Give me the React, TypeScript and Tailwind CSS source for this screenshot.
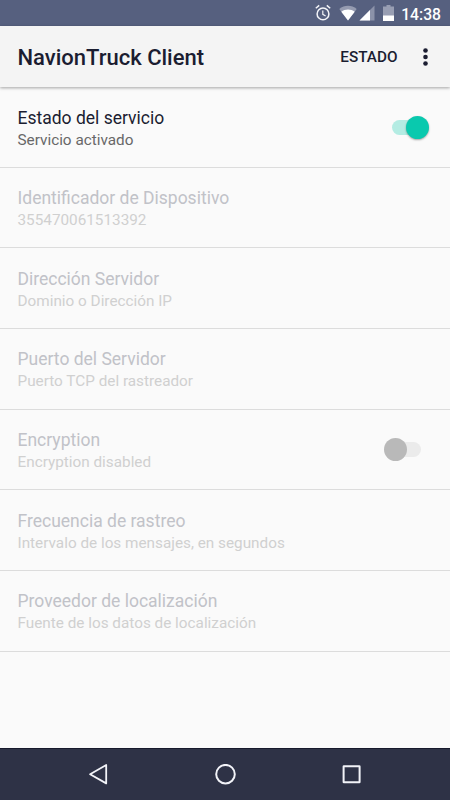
import clsx from 'clsx';

interface SettingItem {
  title: string;
  summary: string;
  enabled?: boolean;
  toggle?: 'on' | 'off';
}

const settings: SettingItem[] = [
  { title: 'Estado del servicio', summary: 'Servicio activado', enabled: true, toggle: 'on' },
  { title: 'Identificador de Dispositivo', summary: '355470061513392' },
  { title: 'Dirección Servidor', summary: 'Dominio o Dirección IP' },
  { title: 'Puerto del Servidor', summary: 'Puerto TCP del rastreador' },
  { title: 'Encryption', summary: 'Encryption disabled', toggle: 'off' },
  { title: 'Frecuencia de rastreo', summary: 'Intervalo de los mensajes, en segundos' },
  { title: 'Proveedor de localización', summary: 'Fuente de los datos de localización' },
];

const StatusBar = () => (
  <div className="flex h-[26px] shrink-0 items-center justify-end bg-[#56607f] pr-[9px] text-white">
    {/* Alarm */}
    <svg className="h-[18px] w-[18px]" viewBox="0 0 18 18" fill="none" stroke="#f3f4f8">
      <circle cx="9" cy="9.9" r="5.9" strokeWidth="1.5" />
      <path d="M1.8 4.3 5.2 1.4M16.2 4.3 12.8 1.4" strokeWidth="1.5" />
      <path d="M8.8 6.5v3.8l2.8 1.7" strokeWidth="1.2" />
    </svg>
    {/* Wifi */}
    <svg className="ml-[7px] h-4 w-[18px]" viewBox="0 0 18 16">
      <path d="M9 15.4 0.3 4.1C5.3-.3 12.7-.3 17.7 4.1z" fill="#959bb0" />
      <path d="M9 15.4 2.3 6.7c3.8-3 9.6-3 13.4 0z" fill="#fff" />
    </svg>
    {/* Mobile signal */}
    <svg className="ml-[2px] h-4 w-4" viewBox="0 0 16 16">
      <path d="M.5 15.5 15.5.5v15z" fill="#8b92a9" />
      <path d="M.5 15.5 11 5v10.5z" fill="#fff" />
    </svg>
    {/* Battery */}
    <svg className="ml-[8px] h-4 w-[11px]" viewBox="0 0 11 16">
      <path d="M3.5 0h4v1.5H11V11H0V1.5h3.5z" fill="#989eb3" />
      <path d="M0 10.5h11V16H0z" fill="#fff" />
    </svg>
    <span className="ml-[7px] pt-[3px] text-[15.7px] leading-none font-medium">14:38</span>
  </div>
);

const AppBar = () => (
  <header className="z-10 flex h-[61.2px] shrink-0 items-center bg-[#f4f4f4] pl-[17.5px] text-[#1b1d31] shadow-[0_1px_3px_rgba(0,0,0,0.35)]">
    <h1 className="pt-[3px] text-[22px] leading-none font-medium whitespace-nowrap">NavionTruck Client</h1>
    <button className="ml-auto pt-[3px] text-[15.3px] leading-none font-medium">ESTADO</button>
    <button className="mr-[22px] ml-[25.5px]" aria-label="Menu">
      <svg className="h-[18px] w-[5px]" viewBox="0 0 5 18" fill="#1b1d31">
        <circle cx="2.5" cy="2.5" r="2.3" />
        <circle cx="2.5" cy="9" r="2.3" />
        <circle cx="2.5" cy="15.5" r="2.3" />
      </svg>
    </button>
  </header>
);

const Toggle = ({ state }: { state: 'on' | 'off' }) => {
  const on = state === 'on';
  return (
    <div className="relative mr-[21px] h-[23px] w-[45px]">
      <span
        className={clsx(
          'absolute top-1 left-2 h-[15px] w-[29px] rounded-full',
          on ? 'bg-[#b4ece3]' : 'bg-[#ebebeb]'
        )}
      />
      <span
        className={clsx(
          'absolute top-0 h-[23px] w-[23px] rounded-full',
          on ? 'right-0 bg-[#09c9ae] shadow-[0_1px_2px_rgba(0,0,0,0.35)]' : 'left-0 bg-[#b9b9b9]'
        )}
      />
    </div>
  );
};

const SettingRow = ({ title, summary, enabled, toggle }: SettingItem) => (
  <li className="flex h-[80.65px] items-center justify-between border-b border-[#dcdcdc] pl-[17.5px]">
    <div className="pt-[3px] whitespace-nowrap">
      <div className={clsx('text-[17.5px] leading-[22px]', enabled ? 'text-[#1b1d31]' : 'text-[#c1c2c8]')}>
        {title}
      </div>
      <div className={clsx('text-[15.3px] leading-[22px]', enabled ? 'text-[#686868]' : 'text-[#d0d0d0]')}>
        {summary}
      </div>
    </div>
    {toggle && <Toggle state={toggle} />}
  </li>
);

const NavigationBar = () => (
  <nav className="flex h-[52px] shrink-0 items-center justify-center gap-[105.5px] border-t border-[#171a2c] bg-[#2e3246]">
    <svg className="h-[21px] w-[21px]" viewBox="0 0 21 21" fill="none" stroke="#f2f3f8" strokeWidth="1.8" strokeLinejoin="round">
      <path d="M18.2 1v18.4L2.1 10.2z" />
    </svg>
    <svg className="h-[21px] w-[21px]" viewBox="0 0 21 21" fill="none" stroke="#f2f3f8" strokeWidth="2">
      <circle cx="10.5" cy="10.2" r="9.3" />
    </svg>
    <svg className="h-[21px] w-[21px]" viewBox="0 0 21 21" fill="none" stroke="#f2f3f8" strokeWidth="2">
      <rect x="2.6" y="2.2" width="16" height="16" rx="0.3" />
    </svg>
  </nav>
);

const App = () => (
  <div className="flex h-[800px] w-[450px] flex-col overflow-hidden bg-[#fafafa] font-[Roboto,sans-serif]">
    <StatusBar />
    <AppBar />
    <main className="flex-1 overflow-hidden">
      <ul>
        {settings.map((item) => (
          <SettingRow key={item.title} {...item} />
        ))}
      </ul>
    </main>
    <NavigationBar />
  </div>
);

export default App;
